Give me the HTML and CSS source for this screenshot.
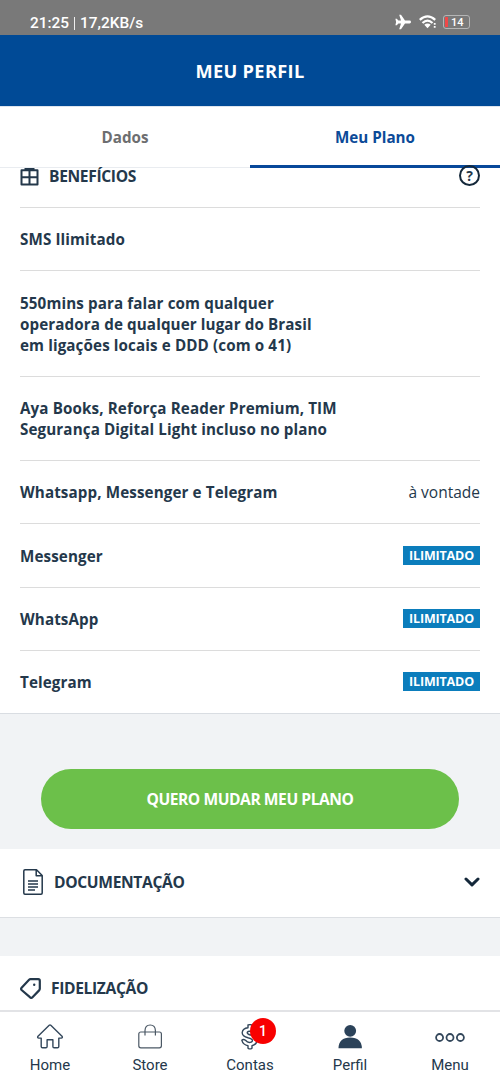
FILE: index.html
```html
<!DOCTYPE html>
<html lang="pt-BR">
<head>
<meta charset="utf-8">
<title>Meu Perfil</title>
<link rel="stylesheet" href="styles.css">
</head>
<body>
<div class="status">
  <span class="status-text">21:25<i class="status-sep"></i>17,2KB/s</span>
  <span class="status-icons">
    <svg class="plane" width="16" height="16" viewBox="0 0 16 16"><path fill="#fff" d="M14.600 6.600H10L6 .8H4.200L6 6.600H3.400L1.800 4.800H.4L1.100 8 .4 11.200h1.400L3.400 9.400H6L4.200 15.200H6L10 9.400h4.600a1.400 1.400 0 0 0 0-2.800z"/></svg>
    <svg class="wifi" width="18" height="14" viewBox="0 0 18 14"><g fill="none" stroke="#fff" stroke-width="2.300"><path d="M.8 4.800Q8.500-2 16.200 4.800"/><path d="M3.500 8Q8.500 3.300 13.500 8"/></g><path fill="#fff" d="M5.300 9.800Q8.500 7.200 11.700 9.800L8.500 13.200zM14.800 8h1.800v1.800h-1.800zM14.800 11h1.800v1.800h-1.800z"/></svg>
    <span class="battery"><i class="charge"></i>14</span>
  </span>
</div>
<header class="header">MEU PERFIL</header>
<nav class="tabs">
  <div class="tab">Dados</div>
  <div class="tab tab-active">Meu Plano</div>
</nav>
<main>
  <section class="benefits">
    <div class="benefits-head">
      <svg class="gift" width="19" height="18" viewBox="0 0 19 18"><path fill="none" stroke="#24384b" stroke-width="2" stroke-linejoin="round" d="M1.500 2.200h16v14.300h-16zM9.500 2v15M1.500 9.300h16"/><path fill="#24384b" d="M4.500 0h10v2.500h-10z"/></svg>
      <h2 class="title benefits-title">BENEFÍCIOS</h2>
      <span class="help">?</span>
    </div>
    <div class="row"><b>SMS Ilimitado</b></div>
    <div class="row"><b>550mins para falar com qualquer<br>operadora de qualquer lugar do Brasil<br>em ligações locais e DDD (com o 41)</b></div>
    <div class="row"><b>Aya Books, Reforça Reader Premium, TIM<br>Segurança Digital Light incluso no plano</b></div>
    <div class="row"><b>Whatsapp, Messenger e Telegram</b><span class="value">à vontade</span></div>
    <div class="row"><b>Messenger</b><span class="tag">ILIMITADO</span></div>
    <div class="row"><b>WhatsApp</b><span class="tag">ILIMITADO</span></div>
    <div class="row"><b>Telegram</b><span class="tag">ILIMITADO</span></div>
  </section>
  <div class="cta"><div class="button">QUERO MUDAR MEU PLANO</div></div>
  <section class="card docs">
    <svg width="20" height="26" viewBox="0 0 20 26"><path fill="none" stroke="#24384b" stroke-width="1.500" stroke-linejoin="round" d="M2 .8h11.500l5.700 5.700v17.500q0 1.200-1.200 1.200H2Q.8 25.200.8 24V2Q.8.8 2 .8zM13.200 1v5.800h5.800"/><path stroke="#24384b" stroke-width="1.400" d="M5 12h10M5 15h10M5 18h10M5 21h7"/></svg>
    <h2 class="title docs-title">DOCUMENTAÇÃO</h2>
    <svg class="chevron" width="16" height="10" viewBox="0 0 16 10"><path fill="none" stroke="#14283a" stroke-width="3" stroke-linecap="round" stroke-linejoin="round" d="M2 2l6 5.800L14 2"/></svg>
  </section>
  <section class="card loyalty">
    <svg width="21" height="21" viewBox="0 0 21 21"><path fill="none" stroke="#24384b" stroke-width="2.200" stroke-linejoin="round" d="M10.500 1.200h7.800q1.500 0 1.500 1.500v8q0 1-.7 1.700l-6.600 6.800q-1.300 1.300-2.600 0L1.600 12q-1-1.100 0-2.200l7.500-8q.6-.6 1.400-.6z"/><circle cx="14.200" cy="6.700" r="1.200" fill="#24384b"/></svg>
    <h2 class="title loyalty-title">FIDELIZAÇÃO</h2>
  </section>
</main>
<footer class="bottom">
  <div class="item">
    <svg width="28" height="26" viewBox="0 0 28 26"><path fill="none" stroke="#33475b" stroke-width="1.400" stroke-linejoin="round" d="M13.200 1.300q.8-.7 1.600 0L26 12.200q1 1.800-.8 1.900H22.800v8.400q0 1.300-1.300 1.300h-3.400q-1.200 0-1.200-1.200v-6.800h-5.800v6.800q0 1.200-1.200 1.200H6.500q-1.300 0-1.300-1.300v-8.400H2.800q-1.800-.1-.8-1.900z"/></svg>
    <span>Home</span>
  </div>
  <div class="item">
    <svg width="28" height="26" viewBox="0 0 28 26"><g fill="none" stroke="#4b5865" stroke-width="1.200"><rect x="2.800" y="8" width="22.600" height="15.800" rx="2"/><path d="M9 11.500V6.500Q9.200 1 14.200 1t5.200 5.500v5"/></g></svg>
    <span>Store</span>
  </div>
  <div class="item accounts">
    <svg width="28" height="26" viewBox="0 0 28 26"><path fill="none" stroke="#33475b" stroke-width="1.400" stroke-linejoin="round" d="M12 1q2-.8 4 0v3q4 .8 4.500 4.500h-4q-1-1.500-3-1.300-3 .3-2 2.300 1 1.200 4 1.700 5.500 1.400 5.500 5.500-.5 4-5 5v2.500q-2 1.400-4 0v-2.500q-5-.8-6.200-5.500 1.500-1.600 3.700 0 2 2.500 4.500 2.200 3-.4 2.300-2.600-1-1.400-4.300-2.100Q6 12.200 6.200 8.500q.5-4 5.800-4.700z"/></svg>
    <i class="count">1</i>
    <span>Contas</span>
  </div>
  <div class="item">
    <svg width="28" height="26" viewBox="0 0 28 26"><circle cx="14.200" cy="6.800" r="5.900" fill="#2b4259"/><path fill="#2b4259" d="M2.500 24.200q.3-10.700 11.700-10.700t11.700 10.700z"/></svg>
    <span>Perfil</span>
  </div>
  <div class="item">
    <svg width="30" height="26" viewBox="0 0 30 26"><g fill="none" stroke="#33475b" stroke-width="1.800"><circle cx="4.600" cy="13.500" r="3.500"/><circle cx="15" cy="13.500" r="3.500"/><circle cx="25.400" cy="13.500" r="3.500"/></g></svg>
    <span>Menu</span>
  </div>
</footer>
</body>
</html>
```
FILE: styles.css
```css
* { box-sizing: border-box; }
body { margin: 0; width: 500px; height: 1083px; overflow: hidden; display: flex; flex-direction: column; background: #fff; color: #24384b; font-family: "Open Sans", sans-serif; }
.status { height: 35px; flex: none; background: #797979; color: #fff; display: flex; justify-content: space-between; padding: 9px 30px 0 30px; font: 500 15.4px/28px Roboto, sans-serif; }
.status-sep { display: inline-block; width: 1px; height: 13px; margin: 0 5px; background: #eee; vertical-align: -2px; }
.status-icons { display: flex; align-items: center; height: 26px; }
.plane { margin-right: 8px; }
.wifi { margin-right: 6px; }
.battery { width: 27px; height: 14px; border: 1.500px solid #b5b5b5; border-radius: 3px; font: 500 11px/13px Roboto, sans-serif; display: flex; padding: 0 0 0 1px; }
.charge { width: 3px; height: 10px; margin: 1px 3px 0 0; background: #f04848; }
.header { height: 71px; flex: none; background: #004a96; color: #fff; text-align: center; font-size: 18.200px; font-weight: 700; line-height: 72px; letter-spacing: .35px; }
.tabs { height: 62px; flex: none; display: flex; border-top: 1px solid #dde5ee; }
.tab { width: 250px; text-align: center; font-size: 15.200px; font-weight: 700; line-height: 61px; color: #6d6e70; border-bottom: 1px solid #e9ecf0; }
.tab-active { color: #0b4a98; border-bottom: 3px solid #07489a; }
.benefits { padding: 0 20px; border-bottom: 1px solid #d9dde2; }
.benefits-head { height: 39px; display: flex; align-items: flex-start; }
.title { margin: 0; font-size: 15.600px; font-weight: 700; line-height: 20px; letter-spacing: -.35px; }
.benefits-title { margin: -2px 0 0 10px; }
.help { width: 21px; height: 21px; margin: -3px 0 0 auto; border: 2px solid #14283a; border-radius: 50%; text-align: center; font-size: 14px; font-weight: 700; line-height: 17px; }
.row { border-top: 1px solid #dcdcdc; padding: 21.300px 0 20.050px; display: flex; justify-content: space-between; font-size: 15.200px; line-height: 21px; }
.row b { font-weight: 700; letter-spacing: .11px; }
.value { font-size: 15.500px; }
.tag { background: #0b7dbc; color: #fff; width: 77px; height: 19px; text-align: center; font-size: 12.500px; font-weight: 700; line-height: 19px; letter-spacing: -.15px; }
.cta { background: #f1f3f5; height: 135px; padding: 55px 41px 0 41px; }
.button { height: 60px; border-radius: 30px; background: #6cc04a; color: #fff; text-align: center; font-size: 15.600px; font-weight: 700; line-height: 61px; letter-spacing: -.45px; }
.card { display: flex; align-items: center; }
.docs { height: 69px; padding: 0 20px 2px 23px; border-bottom: 1.500px solid #dcdfe3; }
.docs-title { margin-left: 11px; }
.chevron { margin-left: auto; }
.loyalty { border-top: 38px solid #f1f3f5; height: 102px; padding: 0 20px; }
.loyalty-title { margin-left: 10px; }
.bottom { position: fixed; left: 0; bottom: 0; width: 500px; height: 73px; border-top: 2px solid #e2e3e6; background: #fff; display: flex; font: 15px/20px Roboto, sans-serif; padding-top: 12px; }
.item { width: 100px; display: flex; flex-direction: column; align-items: center; gap: 5px; }
.accounts { position: relative; }
.count { position: absolute; left: 50px; top: -6px; width: 26px; height: 26px; border-radius: 50%; background: #f80000; color: #fff; text-align: center; font: 500 14px/26px Roboto, sans-serif; }
```
